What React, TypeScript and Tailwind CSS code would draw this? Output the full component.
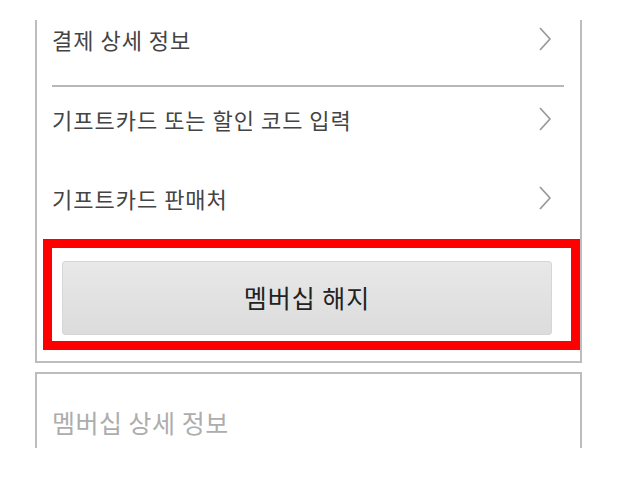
const rows = ["기프트카드 또는 할인 코드 입력", "기프트카드 판매처"];

function Chevron() {
  return (
    <svg width="14" height="26" viewBox="0 0 14 26" fill="none" className="mr-[28px]">
      <polyline points="2,2 12,13 2,24" stroke="#9a9a9a" strokeWidth="1.8" strokeLinejoin="round" />
    </svg>
  );
}

export default function App() {
  return (
    <div
      className="h-[503px] w-[628px] overflow-hidden bg-white"
      style={{ fontFamily: '"Noto Sans CJK KR", "Noto Sans", sans-serif' }}
    >
      <div className="ml-[35px] mt-[20px] w-[547px] border-x-2 border-b-2 border-[#bdbdbd]">
        <div className="flex h-[38px] items-center justify-between pl-[15px]">
          <span className="text-[22px] tracking-[1px] text-[#444]">결제 상세 정보</span>
          <Chevron />
        </div>
        <div className="ml-[15px] mr-[16px] mt-[27px] h-[2px] bg-[#b8b8b8]" />
        <div className="flex h-[64px] items-center justify-between pl-[15px]">
          <span className="text-[22px] tracking-[1px] text-[#444]">{rows[0]}</span>
          <Chevron />
        </div>
        <div className="flex h-[88px] items-center justify-between pl-[15px] pt-[6px]">
          <span className="text-[22px] tracking-[1px] text-[#444]">{rows[1]}</span>
          <Chevron />
        </div>
        <div className="ml-[6px] border-[9px] border-[#ff0000] pb-[6px] pl-[10px] pr-[19px] pt-[13px]">
          <button className="flex h-[74px] w-full items-center justify-center rounded-[3px] border border-[#d6d6d6] bg-gradient-to-b from-[#e8e8e8] to-[#dcdcdc] text-[25px] tracking-[1px] text-[#222]">
            멤버십 해지
          </button>
        </div>
        <div className="h-[11px]" />
      </div>
      <div className="ml-[35px] mt-[9px] h-[76px] w-[547px] border-x-2 border-t-2 border-[#bdbdbd] pl-[15px] pt-[30px]">
        <span className="text-[25px] tracking-[0.5px] text-[#adadad]">멤버십 상세 정보</span>
      </div>
    </div>
  );
}
